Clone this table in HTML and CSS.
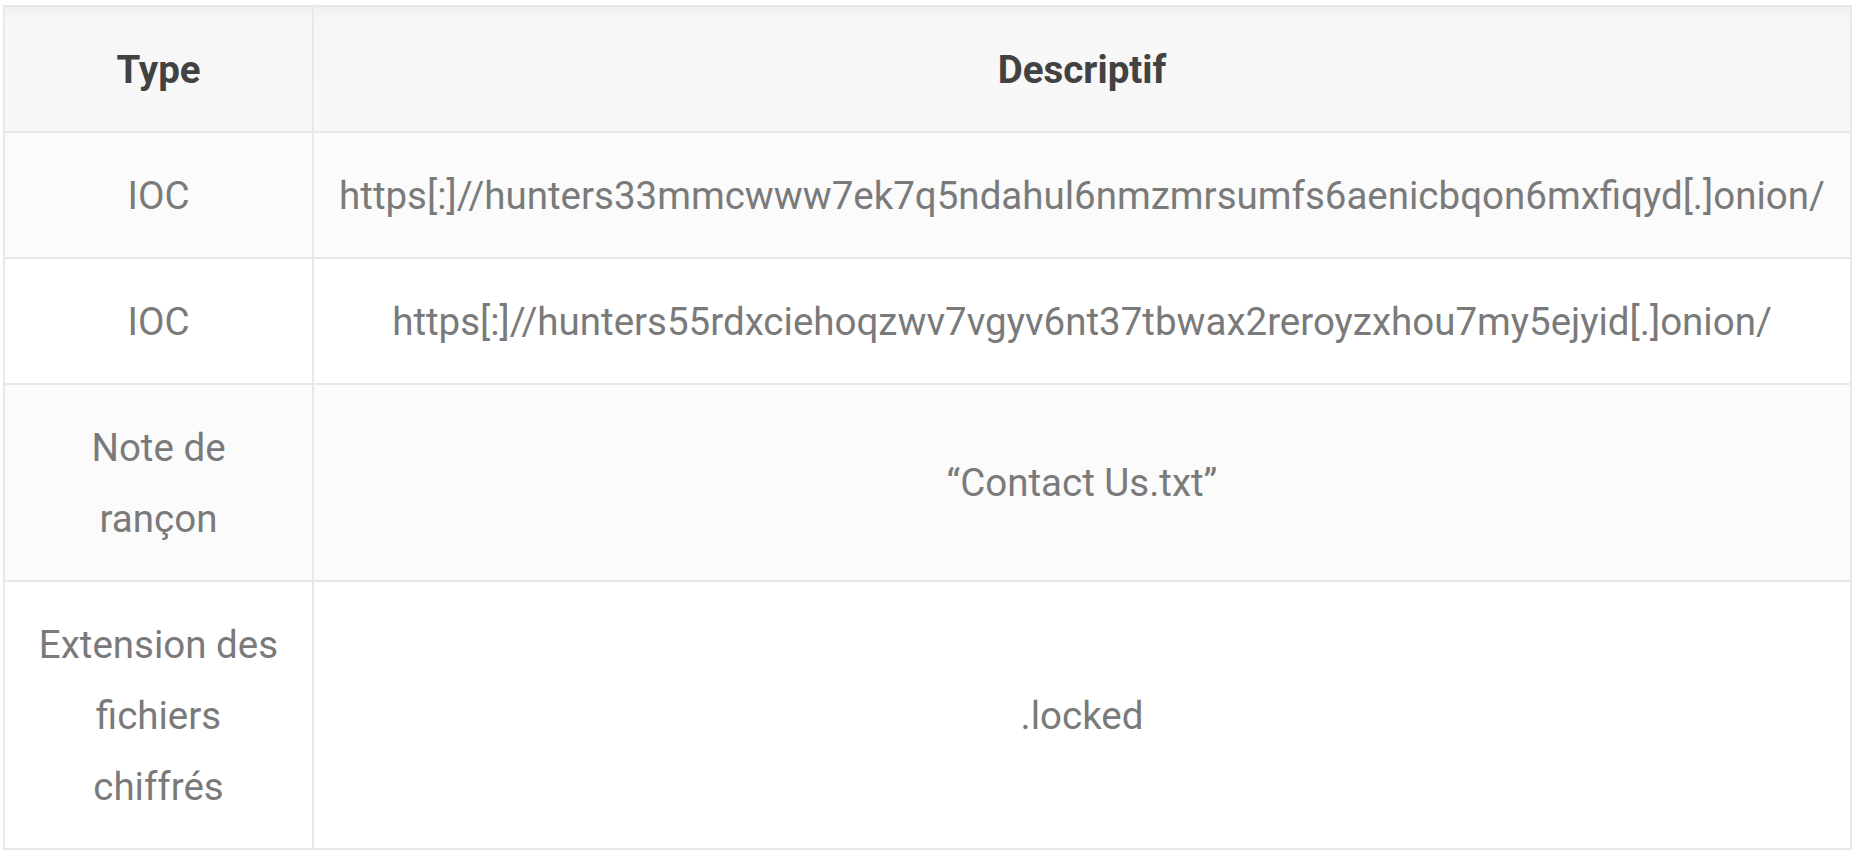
FILE: index.html
```html
<!DOCTYPE html>
<html lang="fr">
<head>
<meta charset="utf-8">
<link rel="stylesheet" href="styles.css">
</head>
<body>
<div class="wrap">
<table class="ioc">
  <thead>
    <tr><th class="c1">Type</th><th>Descriptif</th></tr>
  </thead>
  <tbody>
    <tr class="odd"><td class="c1">IOC</td><td>https[:]//hunters33mmcwww7ek7q5ndahul6nmzmrsumfs6aenicbqon6mxfiqyd[.]onion/</td></tr>
    <tr><td class="c1">IOC</td><td>https[:]//hunters55rdxciehoqzwv7vgyv6nt37tbwax2reroyzxhou7my5ejyid[.]onion/</td></tr>
    <tr class="odd"><td class="c1">Note de rançon</td><td>“Contact Us.txt”</td></tr>
    <tr><td class="c1">Extension des fichiers chiffrés</td><td>.locked</td></tr>
  </tbody>
</table>
</div>
</body>
</html>
```
FILE: styles.css
```css
html, body {
  margin: 0;
  padding: 0;
  background: #ffffff;
}
.wrap {
  padding: 5px 7px 0 3px;
}
.ioc {
  width: 100%;
  border-collapse: collapse;
  font-family: Roboto, "Liberation Sans", sans-serif;
  font-size: 38.5px;
  line-height: 71px;
  color: #7a7a7a;
  table-layout: fixed;
}
.ioc th, .ioc td {
  border: 2px solid #e8e8e8;
  padding: 26.5px 24px;
  text-align: center;
  vertical-align: middle;
}
.ioc th.c1, .ioc td.c1 {
  width: 259px;
}
.ioc th {
  color: #424242;
  font-weight: 700;
  background: linear-gradient(#f0f0f0 0, #f7f7f7 14px, #f8f8f8 100%);
}
.ioc tr td {
  background: #ffffff;
}
.ioc tr.odd td {
  background: #fbfbfb;
}
```
